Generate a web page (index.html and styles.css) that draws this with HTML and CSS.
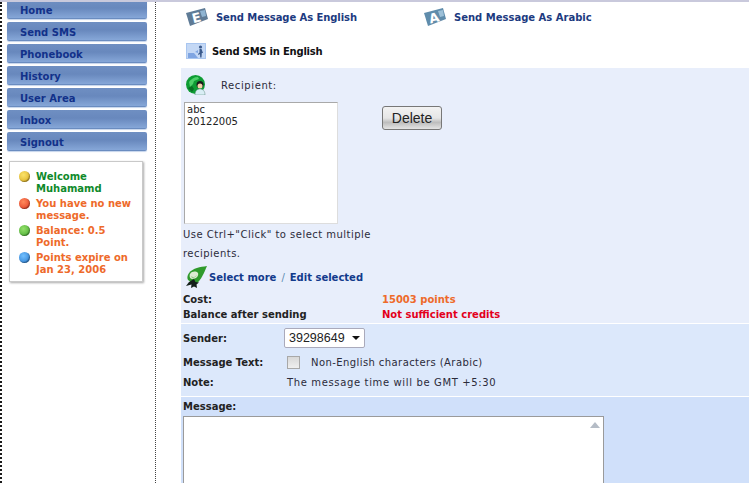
FILE: index.html
```html
<!DOCTYPE html>
<html lang="en">
<head>
<meta charset="UTF-8">
<meta name="viewport" content="width=device-width, initial-scale=1.0">
<title>Send SMS</title>
<link rel="stylesheet" href="styles.css">
</head>
<body>

<div class="page">
    <div class="sidebar">
        <ul class="nav">
            <li><a href="#">Home</a></li>
            <li><a href="#">Send SMS</a></li>
            <li><a href="#">Phonebook</a></li>
            <li><a href="#">History</a></li>
            <li><a href="#">User Area</a></li>
            <li><a href="#">Inbox</a></li>
            <li><a href="#">Signout</a></li>
        </ul>
        <div class="status">
            <div class="status-row green"><span class="ball ball-yellow"></span><span>Welcome Muhamamd</span></div>
            <div class="status-row"><span class="ball ball-red"></span><span>You have no new message.</span></div>
            <div class="status-row"><span class="ball ball-green"></span><span>Balance: 0.5 Point.</span></div>
            <div class="status-row"><span class="ball ball-blue"></span><span>Points expire on Jan 23, 2006</span></div>
        </div>
    </div>

    <div class="main">
        <div class="lang-links">
            <a href="#" class="lang-link">
                <svg width="22" height="18" viewBox="0 0 22 18"><path d="M0 5 19 0l3 11L4 18z" fill="#5f7b96"/><path d="M14 3l5-1 1 6-4 1z" fill="#8fb4d2"/><text x="6" y="14.500" transform="rotate(-14 10 10)" class="card-letter">E</text></svg>
                <span class="lang-text">Send Message As English</span>
            </a>
            <a href="#" class="lang-link">
                <svg width="22" height="18" viewBox="0 0 22 18"><path d="M0 5 19 0l3 11L4 18z" fill="#5f8cab"/><path d="M14 3l5-1 1 6-4 1z" fill="#9cc0d8"/><text x="5" y="14.500" transform="rotate(-14 10 10)" class="card-letter">A</text></svg>
                <span>Send Message As Arabic</span>
            </a>
        </div>

        <div class="page-title">
            <svg width="20" height="17" viewBox="0 0 20 17"><rect width="20" height="16" fill="#a9c6f0"/><rect x="1" y="1" width="18" height="14" fill="#c4d8f5"/><path d="M2 15v-5h6l4 5z" fill="#7fa5e2"/><path d="M9 9l3-2v3z" fill="#7fa5e2"/><circle cx="14.500" cy="4" r="1.600" fill="#3b5a8c"/><path d="M13.500 6h2l1.500 4h-1.200l-.3 4.500h-1.300L14 11l-1.500 1-.5-1 1.500-1.500z" fill="#3b5a8c"/></svg>
            Send SMS in English
        </div>

        <div class="panel panel-recipients">
            <div class="recipient-head">
                <svg width="20" height="20" viewBox="0 0 20 20"><circle cx="9.500" cy="9.500" r="9.500" fill="#0f9c34"/><path d="M3 7c2-3 5-5 9-5l1 2-5 2-1 3-3 3z" fill="#4fd06a"/><path d="M2 13l4-2 2 3-2 3z" fill="#0a6f24"/><circle cx="14" cy="9.500" r="3.500" fill="#1a1a1a"/><circle cx="14" cy="11" r="2.500" fill="#f5d2a8"/><path d="M9 20c0-4 2-6 5-6s5 2 5 6z" fill="#d9eef5" stroke="#5a8a7a" stroke-width="0.500"/></svg>
                <span>Recipient:</span>
            </div>
            <div class="recipient-body">
                <div class="listbox">
                    <div>abc</div>
                    <div>20122005</div>
                </div>
                <button type="button" class="btn-delete">Delete</button>
            </div>
            <p class="hint">Use Ctrl+"Click" to select multiple recipients.</p>
            <div class="select-more">
                <svg width="21" height="22" viewBox="0 0 21 22"><path d="M21 0C14 1 7 2 3 7c-2 3-2 5-1 7l3 2 6 1c4-3 7-10 10-17z" fill="#2f9a2b"/><path d="M4 8c2-3 6-3 8-1 1 3-2 6-6 6-2 0-3-3-2-5z" fill="#dcebd2"/><path d="M5 10c2 2 4 1 6-1-1 2-3 3-5 3z" fill="#8fbf80"/><path d="M8 13l1.500 3 3.500.500-2.500 2L11 22l-3-1.500L5 22l.5-3.500L0 20l3-4z" fill="#14201a"/></svg>
                <a href="#">Select more</a> <span class="slash">/</span> <a href="#">Edit selected</a>
            </div>
            <div class="cost-grid">
                <b>Cost:</b><b class="orange">15003 points</b>
                <b>Balance after sending</b><b class="red">Not sufficient credits</b>
            </div>
        </div>

        <div class="panel panel-sender">
            <div class="sender-row">
                <b class="sender-label">Sender:</b>
                <div class="select-box">39298649 <span class="arrow"></span></div>
            </div>
            <div class="text-row">
                <b class="sender-label">Message Text:</b>
                <span class="checkbox"></span>
                <span class="arabic-label">Non-English characters (Arabic)</span>
            </div>
            <div class="note-row">
                <b class="sender-label">Note:</b>
                <span class="note-text">The message time will be GMT +5:30</span>
            </div>
        </div>

        <div class="panel panel-message">
            <b class="message-label">Message:</b>
            <div class="textarea"><span class="scroll-up"></span></div>
        </div>
    </div>
</div>

</body>
</html>
```

FILE: styles.css
```css
html, body {
    margin: 0;
    height: 483px;
    overflow: hidden;
    background-color: #fff;
}
body {
    font-family: "DejaVu Sans", Verdana, sans-serif;
    font-size: 10px;
    color: #2b2b3a;
    border-top: 2px solid #c9c9dc;
    box-sizing: border-box;
}
a {
    text-decoration: none;
}
.page {
    display: flex;
    height: 481px;
    overflow: hidden;
}
.sidebar {
    width: 155px;
    flex: none;
    border-left: 2px dotted #1c1c1c;
    box-sizing: border-box;
    padding-left: 5px;
}
.nav {
    list-style: none;
    margin: -2px 0 0;
    padding: 0;
    width: 140px;
}
.nav li {
    height: 19px;
    margin-bottom: 3px;
}
.nav a {
    display: block;
    height: 19px;
    line-height: 21px;
    padding-left: 13px;
    border-radius: 2px;
    font-size: 10px;
    font-weight: bold;
    color: #12318a;
    background: linear-gradient(#6f8fc2, #6888bd 45%, #86a7d8);
    border-bottom: 1px solid #6a8cc0;
    box-shadow: 0 1px 1px #c5d4ec;
    box-sizing: border-box;
}
.status {
    width: 134px;
    height: 121px;
    margin: 10px 0 0 2px;
    padding: 9px 4px 0 9px;
    box-sizing: border-box;
    border: 1px solid #c9c9c9;
    box-shadow: 1px 1px 2px #aaa;
    font-weight: bold;
    font-size: 10px;
    line-height: 12px;
    color: #ee6a2a;
}
.status-row {
    display: flex;
    gap: 6px;
    margin-bottom: 3px;
}
.status-row.green {
    color: #0f8a2b;
}
.ball {
    width: 11px;
    height: 11px;
    flex: none;
    border-radius: 50%;
    box-shadow: inset -1px -1px 1px rgba(0, 0, 0, 0.35);
}
.ball-yellow { background: radial-gradient(circle at 40% 35%, #fbe36a, #d8a91c); }
.ball-red { background: radial-gradient(circle at 40% 35%, #ff8a5c, #e0341f); }
.ball-green { background: radial-gradient(circle at 40% 35%, #94e06a, #3fa52c); }
.ball-blue { background: radial-gradient(circle at 40% 35%, #72c0ff, #2678cc); }

.main {
    flex: 1;
    border-left: 1px dotted #444;
    padding-left: 25px;
    min-width: 0;
}
.lang-links {
    display: flex;
    height: 31px;
    padding: 6px 0 0 5px;
    box-sizing: border-box;
}
.lang-link {
    display: flex;
    align-items: center;
    gap: 8px;
    width: 238px;
    height: 18px;
    font-weight: bold;
    color: #1c3a80;
}
.lang-text {
    letter-spacing: -0.08px;
}
.card-letter {
    font-family: "DejaVu Sans", Verdana, sans-serif;
    font-size: 13px;
    font-weight: bold;
    fill: #fff;
}
.page-title {
    display: flex;
    align-items: center;
    gap: 6px;
    height: 35px;
    padding: 2px 0 0 5px;
    box-sizing: border-box;
    font-weight: bold;
    letter-spacing: -0.22px;
    color: #111;
}
.panel {
    border-bottom: 1px solid #fff;
}
.panel-recipients {
    height: 256px;
    background-color: #e8eefb;
    padding: 6px 0 0 2px;
    box-sizing: border-box;
}
.recipient-head {
    display: flex;
    align-items: center;
    gap: 15px;
    height: 20px;
    margin-top: 1px;
    padding-left: 3px;
    letter-spacing: 0.6px;
}
.recipient-body {
    display: flex;
    align-items: flex-start;
    gap: 44px;
    margin-top: 7px;
}
.listbox {
    width: 154px;
    height: 122px;
    margin-left: 1px;
    padding: 1px 2px;
    box-sizing: border-box;
    background-color: #fff;
    border: 1px solid #a9a9a9;
    border-right-color: #ddd;
    border-bottom-color: #ddd;
    color: #222;
    line-height: 12px;
}
.btn-delete {
    width: 60px;
    height: 24px;
    margin-top: 4px;
    padding: 0;
    font-family: "Liberation Sans", Arial, sans-serif;
    font-size: 14px;
    color: #222;
    border: 1px solid #777;
    border-radius: 3px;
    background: linear-gradient(#f2f2f2, #e6e6e6 50%, #bdbdbd 70%, #e4e4e4);
}
.hint {
    width: 200px;
    margin: 1px 0 0;
    line-height: 19px;
    letter-spacing: 0.48px;
}
.select-more {
    display: flex;
    align-items: center;
    gap: 3px;
    height: 22px;
    margin-top: 3px;
    padding-left: 3px;
    font-weight: bold;
}
.select-more svg {
    margin-right: -1px;
}
.select-more a {
    color: #123a8c;
}
.slash {
    color: #5c8ab0;
    font-weight: normal;
    margin: 0 2px;
}
.cost-grid {
    display: grid;
    grid-template-columns: 199px 1fr;
    margin-top: 4px;
    line-height: 15px;
    color: #222;
}
.orange { color: #ee6a2a; }
.red { color: #e3001b; }

.panel-sender {
    height: 73px;
    background-color: #dce8fb;
    padding-left: 2px;
    box-sizing: border-box;
}
.sender-row,
.text-row,
.note-row {
    display: flex;
    align-items: center;
}
.sender-row { height: 28px; }
.text-row { height: 20px; }
.note-row { height: 21px; }
.sender-label {
    width: 104px;
    flex: none;
    color: #222;
}
.select-box {
    display: flex;
    align-items: center;
    justify-content: space-between;
    width: 81px;
    height: 20px;
    margin-left: -3px;
    padding: 0 4px;
    box-sizing: border-box;
    background-color: #fff;
    border: 1px solid #aab;
    border-radius: 2px;
    font-family: "Liberation Sans", Arial, sans-serif;
    font-size: 12.500px;
    color: #222;
}
.arrow {
    border-left: 4px solid transparent;
    border-right: 4px solid transparent;
    border-top: 4px solid #111;
}
.checkbox {
    width: 13px;
    height: 13px;
    margin-right: 11px;
    box-sizing: border-box;
    border: 1px solid #a8a8a8;
    background: linear-gradient(#d8d8d8, #efefef);
}
.arabic-label {
    letter-spacing: 0.42px;
}
.note-text {
    letter-spacing: 0.64px;
}
.panel-message {
    height: 90px;
    background-color: #d0e0fa;
    padding: 4px 0 0 2px;
    box-sizing: border-box;
    border-bottom: none;
}
.message-label {
    display: block;
    height: 15px;
    line-height: 12px;
    color: #222;
}
.textarea {
    position: relative;
    width: 421px;
    height: 80px;
    box-sizing: border-box;
    background-color: #fff;
    border: 1px solid #9a9a9a;
    border-bottom: none;
}
.scroll-up {
    position: absolute;
    top: 5px;
    right: 3px;
    border-left: 5px solid transparent;
    border-right: 5px solid transparent;
    border-bottom: 6px solid #b5bcc6;
}
```
